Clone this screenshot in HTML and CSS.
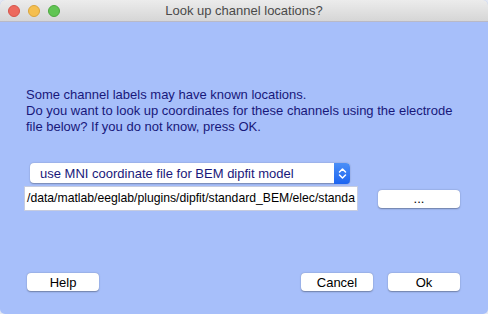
FILE: index.html
```html
<!DOCTYPE html>
<html>
<head>
<meta charset="utf-8">
<link rel="stylesheet" href="styles.css">
</head>
<body>
<div class="window">
  <div class="titlebar">
    <div class="lights">
      <span class="light red"></span>
      <span class="light yellow"></span>
      <span class="light green"></span>
    </div>
    <div class="title">Look up channel locations?</div>
  </div>
  <div class="content">
    <div class="message">
      <div>Some channel labels may have known locations.</div>
      <div>Do you want to look up coordinates for these channels using the electrode</div>
      <div>file below? If you do not know, press OK.</div>
    </div>
    <div class="popup">
      <span class="popup-label">use MNI coordinate file for BEM dipfit model</span>
      <span class="popup-arrows">
        <svg width="9" height="13" viewBox="0 0 9 13"><path d="M1.5 5 L4.5 2 L7.5 5 M1.5 8 L4.5 11 L7.5 8" fill="none" stroke="#fff" stroke-width="1.5" stroke-linecap="round" stroke-linejoin="round"/></svg>
      </span>
    </div>
    <div class="file-row">
      <div class="field">/data/matlab/eeglab/plugins/dipfit/standard_BEM/elec/standa</div>
      <div class="btn browse">...</div>
    </div>
    <div class="spacer"></div>
    <div class="buttons">
      <div class="btn">Help</div>
      <div class="grow"></div>
      <div class="btn">Cancel</div>
      <div class="btn">Ok</div>
    </div>
  </div>
</div>
</body>
</html>
```
FILE: styles.css
```css
html, body {
  margin: 0;
  padding: 0;
  background: #e4e8f2;
}
body {
  font-family: "Liberation Sans", Arial, sans-serif;
  font-size: 13px;
}
.window {
  width: 488px;
  height: 314px;
  display: flex;
  flex-direction: column;
  background: #a7bffa;
  border-radius: 5px;
  overflow: hidden;
}
.titlebar {
  height: 22px;
  flex: none;
  position: relative;
  display: flex;
  align-items: center;
  justify-content: center;
  background: linear-gradient(#ececec, #d6d6d6);
  border-bottom: 1px solid #b9b9c6;
  box-sizing: border-box;
}
.lights {
  position: absolute;
  left: 8px;
  top: 5px;
  display: flex;
  gap: 8px;
}
.light {
  width: 12px;
  height: 12px;
  border-radius: 50%;
  box-sizing: border-box;
}
.red { background: #ed6a5e; border: 1px solid #d5554a; }
.yellow { background: #f5bf4f; border: 1px solid #d9a43c; }
.green { background: #61c554; border: 1px solid #4ca83f; }
.title {
  color: #4a4a4a;
  font-size: 13px;
}
.content {
  flex: 1;
  display: flex;
  flex-direction: column;
  padding: 0 28px 0 24px;
}
.message {
  margin-top: 65px;
  margin-left: 2px;
  color: #18187a;
  line-height: 16px;
  font-size: 13px;
}
.popup {
  margin-top: 28px;
  margin-left: 6px;
  width: 320px;
  height: 20px;
  display: flex;
  align-items: center;
  background: #fff;
  border-radius: 4px;
  box-shadow: 0 0.5px 1.5px rgba(0,0,0,0.3);
  box-sizing: border-box;
}
.popup-label {
  flex: 1;
  padding-left: 10px;
  color: #18187a;
  font-size: 13px;
}
.popup-arrows {
  width: 16px;
  height: 21px;
  background: linear-gradient(#4b8ff7, #1c64f0);
  border-radius: 0 4px 4px 0;
  display: flex;
  align-items: center;
  justify-content: center;
}
.file-row {
  margin-top: 3px;
  display: flex;
  align-items: center;
}
.field {
  width: 334px;
  height: 25px;
  box-sizing: border-box;
  background: #fff;
  border: 1px solid #c6cce0;
  padding: 0 0 0 2px;
  line-height: 23px;
  white-space: nowrap;
  overflow: hidden;
  color: #000;
  font-size: 12.2px;
}
.btn {
  width: 72px;
  height: 18px;
  box-sizing: border-box;
  background: #fff;
  border-radius: 4px;
  box-shadow: 0 0.5px 1.5px rgba(0,0,0,0.35);
  display: flex;
  align-items: center;
  justify-content: center;
  color: #000;
  font-size: 13px;
}
.browse {
  width: 82px;
  margin-left: 20px;
}
.spacer { flex: 1; }
.buttons {
  display: flex;
  align-items: center;
  gap: 15px;
  padding-left: 3px;
  margin-bottom: 23px;
}
.grow { flex: 1; }
```
